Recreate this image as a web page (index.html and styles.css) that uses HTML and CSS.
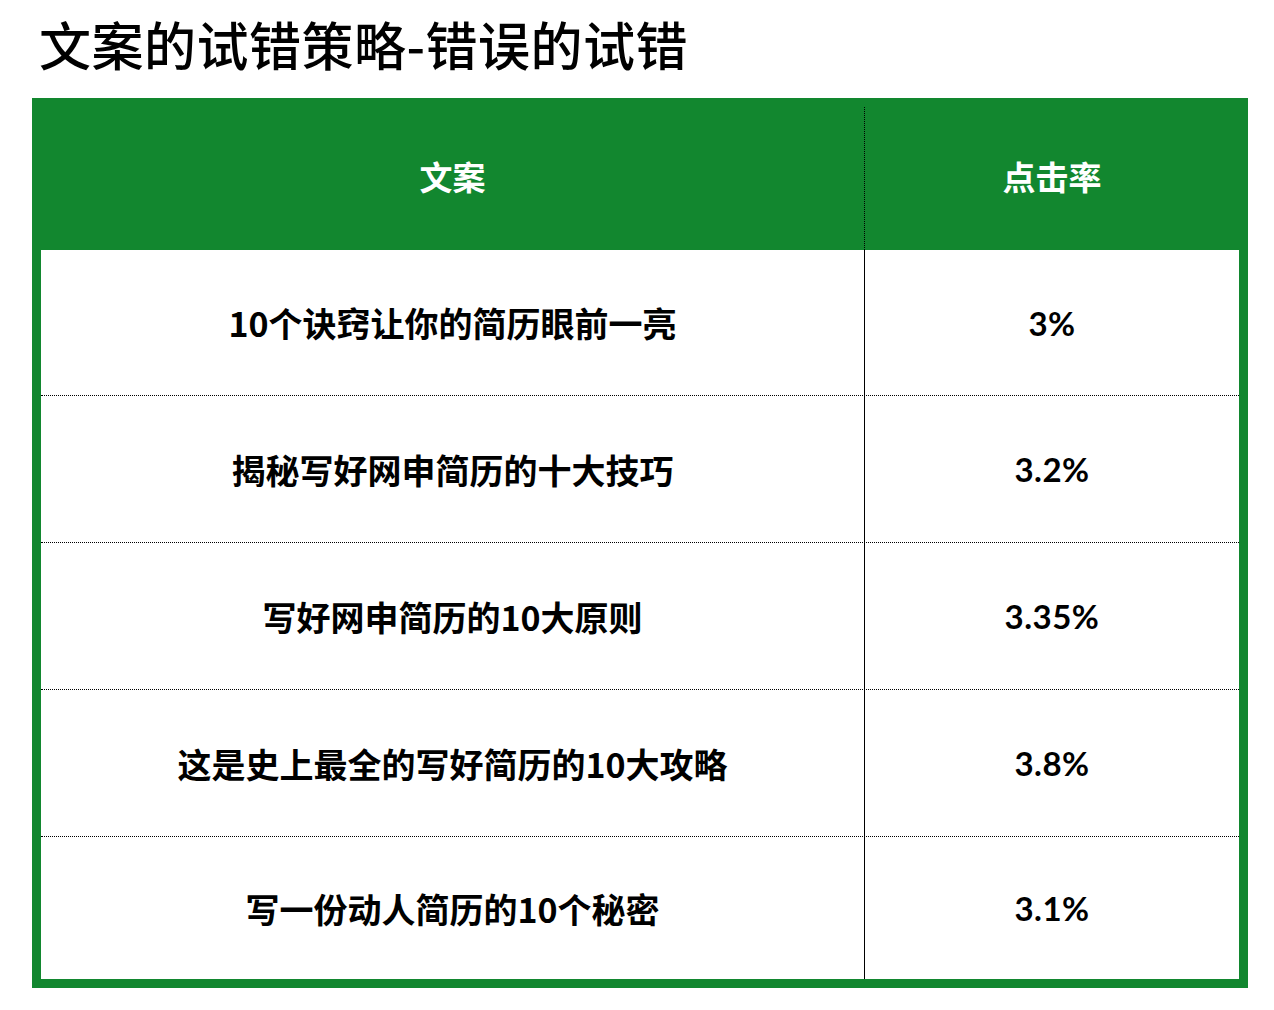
FILE: index.html
```html
<!DOCTYPE html>
<html lang="zh-CN">

<head>
    <meta charset="UTF-8">
    <meta name="viewport" content="width=device-width, initial-scale=1.0">
    <title>文案的试错策略-错误的试错</title>
    <link rel="stylesheet" href="styles.css">
</head>

<body>
    <h1 class="title">文案的试错策略-错误的试错</h1>

    <div class="board">
        <div class="row head">
            <div class="cell">文案</div>
            <div class="cell rate">点击率</div>
        </div>
        <div class="row r1">
            <div class="cell">10个诀窍让你的简历眼前一亮</div>
            <div class="cell rate">3%</div>
        </div>
        <div class="row">
            <div class="cell">揭秘写好网申简历的十大技巧</div>
            <div class="cell rate">3.2%</div>
        </div>
        <div class="row">
            <div class="cell">写好网申简历的10大原则</div>
            <div class="cell rate">3.35%</div>
        </div>
        <div class="row">
            <div class="cell">这是史上最全的写好简历的10大攻略</div>
            <div class="cell rate">3.8%</div>
        </div>
        <div class="row last">
            <div class="cell">写一份动人简历的10个秘密</div>
            <div class="cell rate">3.1%</div>
        </div>
    </div>
</body>

</html>
```

FILE: styles.css
```css
body {
    margin: 0;
    padding: 0;
    background-color: #fff;
    color: #000;
    font-family: "Noto Sans CJK SC", sans-serif;
}

.title {
    margin: 0;
    padding: 11px 0 0 39px;
    height: 98px;
    box-sizing: border-box;
    font-size: 52px;
    font-weight: 500;
    line-height: 66px;
    letter-spacing: 0.5px;
}

.board {
    margin-left: 32px;
    width: 1216px;
    box-sizing: border-box;
    border: 9px solid #12872f;
}

.row {
    display: grid;
    grid-template-columns: 823px 375px;
    height: 147px;
    border-top: 1px dotted #000;
    box-sizing: border-box;
}

.cell {
    display: flex;
    align-items: center;
    justify-content: center;
    font-size: 34px;
    font-weight: 700;
}

.rate {
    border-left: 1px solid #000;
    font-family: Lato, "Noto Sans CJK SC", sans-serif;
    font-size: 33px;
    font-weight: 700;
    letter-spacing: 0.5px;
}

.head {
    height: 143px;
    border-top: none;
    background-color: #12872f;
}

.head .cell {
    padding-bottom: 5px;
    color: #fff;
    font-size: 33px;
    font-weight: 700;
    letter-spacing: 0;
}

.head .rate {
    border-left: 1px dotted #000;
    font-family: "Noto Sans CJK SC", sans-serif;
}

.r1 {
    height: 145px;
    border-top: none;
}

.last {
    height: 143px;
}
```
